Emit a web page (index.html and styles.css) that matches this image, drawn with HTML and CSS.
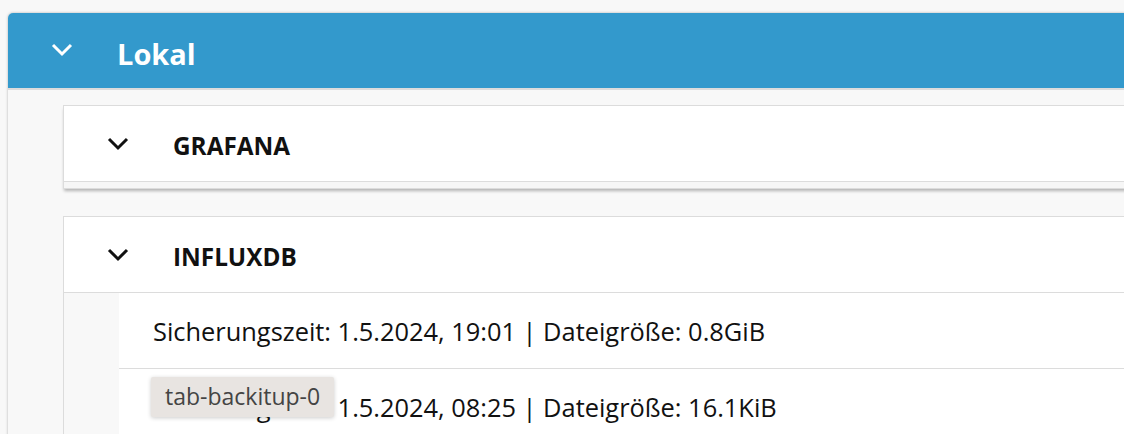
FILE: index.html
```html
<!DOCTYPE html>
<html lang="de">
<head>
<meta charset="utf-8">
<title>Lokal</title>
<link rel="stylesheet" href="styles.css">
</head>
<body>
<div class="outer">
  <div class="outer-header">
    <svg class="chev chev-white" viewBox="0 0 22 14" width="22" height="14"><path d="M2 2 L11 11 L20 2" /></svg>
    <span class="outer-title">Lokal</span>
  </div>
  <div class="outer-body">
    <div class="card card-collapsed">
      <div class="card-header">
        <svg class="chev chev-dark" viewBox="0 0 22 14" width="22" height="14"><path d="M2 2 L11 11 L20 2" /></svg>
        <span class="card-title">GRAFANA</span>
      </div>
      <div class="card-foot"></div>
    </div>
    <div class="card">
      <div class="card-header">
        <svg class="chev chev-dark" viewBox="0 0 22 14" width="22" height="14"><path d="M2 2 L11 11 L20 2" /></svg>
        <span class="card-title">INFLUXDB</span>
      </div>
      <div class="card-body">
        <div class="row">Sicherungszeit: 1.5.2024, 19:01 | Dateigröße: 0.8GiB</div>
        <div class="row">Sicherungszeit: 1.5.2024, 08:25 | Dateigröße: 16.1KiB
          <div class="tooltip">tab-backitup-0</div>
        </div>
      </div>
    </div>
  </div>
</div>
</body>
</html>
```

FILE: styles.css
```css
html, body {
  margin: 0;
  padding: 0;
  background: #f8f8f8;
  overflow: hidden;
  font-family: "Open Sans", "Noto Sans", sans-serif;
}

.outer {
  margin: 13px 0 0 8px;
  width: 1200px;
  border-radius: 5px 0 0 0;
  box-shadow: 0 0 3px rgba(0, 0, 0, 0.28);
  background: #f8f8f8;
  height: 460px;
}

.outer-header {
  height: 75px;
  background: #3399cc;
  border-radius: 5px 0 0 0;
  border-bottom: 2px solid #dcdcdc;
  display: flex;
  align-items: center;
  padding-left: 43px;
}

.chev {
  flex: none;
  fill: none;
  stroke-width: 3;
  stroke-linecap: butt;
  stroke-linejoin: miter;
}

.chev-white {
  stroke: #ffffff;
  margin-top: -1px;
}

.chev-dark {
  stroke: #111111;
}

.outer-title {
  color: #ffffff;
  font-weight: 700;
  font-size: 29px;
  margin-left: 44px;
  padding-top: 6px;
}

.outer-body {
  padding: 15px 0 0 55px;
}

.card {
  background: #ffffff;
  border: 1px solid #dcdcdc;
  border-right: none;
}

.card-collapsed {
  margin-bottom: 27px;
  box-shadow: 0 3px 3px -1px rgba(0, 0, 0, 0.28);
}

.card-header {
  height: 75px;
  display: flex;
  align-items: center;
  padding-left: 43px;
  background: #ffffff;
}

.card-collapsed .card-header {
  border-bottom: 1px solid #dcdcdc;
}

.card-foot {
  height: 6px;
  background: #f6f6f6;
}

.card-title {
  font-weight: 700;
  font-size: 24.3px;
  color: #111111;
  margin-left: 44px;
  padding-top: 3px;
}

.card-body {
  border-top: 1px solid #dcdcdc;
  background: #f8f8f8;
  padding-left: 55px;
}

.row {
  position: relative;
  height: 75px;
  background: #ffffff;
  border-bottom: 1px solid #dcdcdc;
  display: flex;
  align-items: center;
  padding-left: 34px;
  font-size: 25.4px;
  color: #111111;
}

.tooltip {
  position: absolute;
  left: 32px;
  top: 8px;
  padding: 0 14px;
  height: 40px;
  line-height: 38px;
  background: #e8e4e1;
  color: #444444;
  font-size: 23px;
  border-radius: 2px;
  box-shadow: 0 1px 4px rgba(0, 0, 0, 0.2);
}
```
